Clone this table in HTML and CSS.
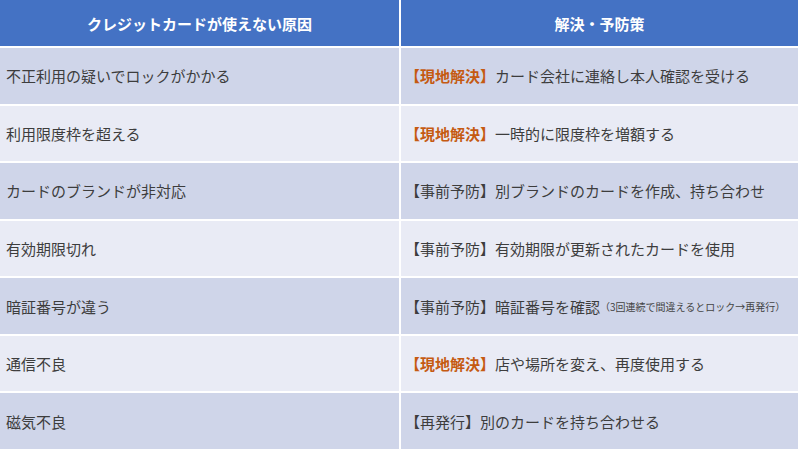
FILE: index.html
```html
<!DOCTYPE html>
<html lang="ja">
<head>
<meta charset="utf-8">
<link rel="stylesheet" href="styles.css">
</head>
<body>
<div class="table">
  <div class="cell head">クレジットカードが使えない原因</div>
  <div class="cell head">解決・予防策</div>

  <div class="cell odd">不正利用の疑いでロックがかかる</div>
  <div class="cell odd sol"><span class="tag">【現地解決】</span>カード会社に連絡し本人確認を受ける</div>

  <div class="cell even">利用限度枠を超える</div>
  <div class="cell even sol"><span class="tag">【現地解決】</span>一時的に限度枠を増額する</div>

  <div class="cell odd">カードのブランドが非対応</div>
  <div class="cell odd sol">【事前予防】別ブランドのカードを作成、持ち合わせ</div>

  <div class="cell even">有効期限切れ</div>
  <div class="cell even sol">【事前予防】有効期限が更新されたカードを使用</div>

  <div class="cell odd">暗証番号が違う</div>
  <div class="cell odd sol">【事前予防】暗証番号を確認<span class="note">（3回連続で間違えるとロック→再発行）</span></div>

  <div class="cell even">通信不良</div>
  <div class="cell even sol"><span class="tag">【現地解決】</span>店や場所を変え、再度使用する</div>

  <div class="cell odd">磁気不良</div>
  <div class="cell odd sol">【再発行】別のカードを持ち合わせる</div>
</div>
</body>
</html>
```

FILE: styles.css
```css
html, body {
  margin: 0;
  padding: 0;
  background: #ffffff;
}
body {
  width: 800px;
  height: 450px;
  overflow: hidden;
  font-family: "Noto Sans CJK JP", "Noto Sans", sans-serif;
}
.table {
  width: 798px;
  height: 450px;
  display: grid;
  grid-template-columns: 399px 397px;
  grid-template-rows: 46px repeat(7, 1fr);
  column-gap: 2px;
  row-gap: 2px;
  padding-bottom: 1px;
  box-sizing: border-box;
}
.cell {
  display: flex;
  align-items: center;
  padding-left: 6px;
  font-size: 15px;
  color: #3d3d3d;
  white-space: nowrap;
}
.sol {
  padding-left: 4px;
}
.head {
  background: #4472c4;
  color: #ffffff;
  font-weight: bold;
  justify-content: center;
  padding-left: 0;
}
.odd {
  background: #cfd5e9;
}
.even {
  background: #e9ebf5;
}
.tag {
  color: #c55a11;
  font-weight: bold;
}
.note {
  font-size: 10px;
  margin-left: 0px;
  color: #444444;
}
```
